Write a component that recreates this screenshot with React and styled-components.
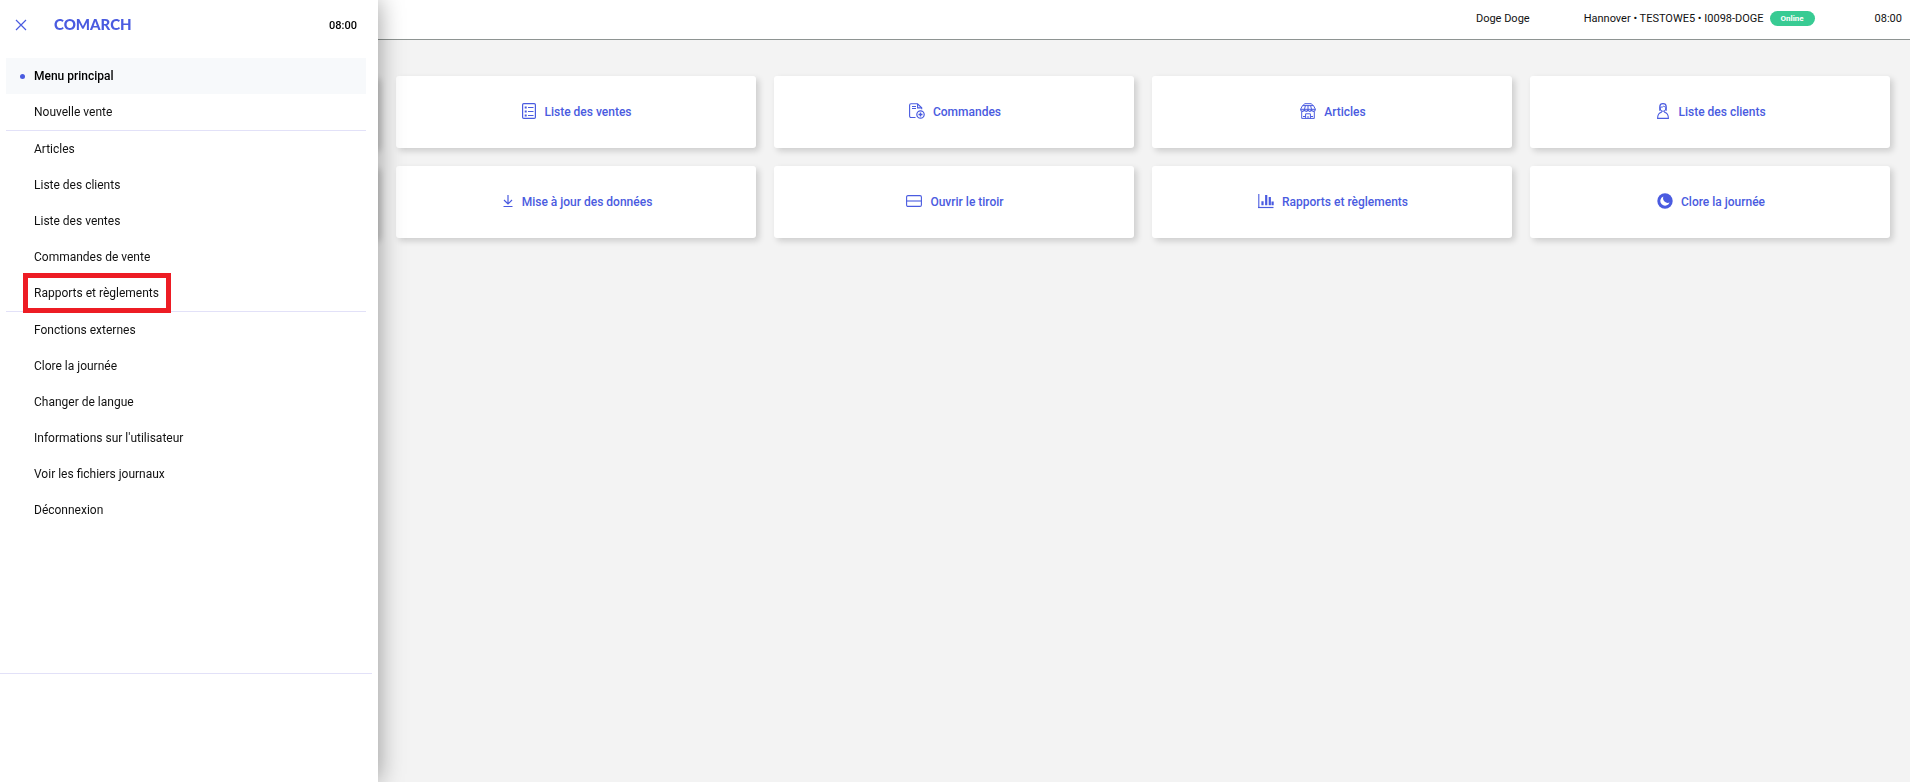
import styled, { createGlobalStyle } from "styled-components";
import { useState } from "react";

const GlobalStyle = createGlobalStyle`
    * {
        box-sizing: border-box;
    }
    body {
        margin: 0;
        background-color: #f3f3f3;
        color: #000;
        font-family: Roboto, "Liberation Sans", sans-serif;
        font-size: 12px;
    }
    button {
        font-family: inherit;
        font-size: inherit;
        border: 0;
        padding: 0;
        cursor: pointer;
    }
`;

const Page = styled.div`
    min-height: 100vh;
`;

const TopBar = styled.header`
    display: flex;
    justify-content: flex-end;
    align-items: center;
    height: 40px;
    padding: 0 8px 2px 0;
    background-color: #fff;
    border-bottom: 1px solid #8e9492;
    font-size: 11px;
    color: #111;
`;

const UserName = styled.span`
    margin-right: 54px;
`;

const Terminal = styled.div`
    display: flex;
    align-items: center;
    gap: 6px;
    margin-right: 60px;
`;

const Badge = styled.span`
    width: 45px;
    border-radius: 8px;
    background-color: #38cb93;
    color: #fff;
    font-size: 8px;
    font-weight: 700;
    line-height: 15px;
    text-align: center;
`;

const Tiles = styled.main`
    display: grid;
    grid-template-columns: repeat(5, 1fr);
    gap: 18px;
    padding: 36px 20px 36px 18px;
`;

const Tile = styled.button`
    display: flex;
    justify-content: center;
    align-items: center;
    gap: 8px;
    height: 72px;
    padding: 0 0 2px 2px;
    border-radius: 3px;
    background-color: #fff;
    color: #4a5be0;
    font-weight: 500;
    box-shadow: 3px 3px 6px rgba(0, 0, 0, 0.16);
`;

const TileLabel = styled.span`
    padding-top: 2px;
`;

const Drawer = styled.aside`
    position: fixed;
    top: 0;
    bottom: 0;
    left: 0;
    display: flex;
    flex-direction: column;
    width: 378px;
    background-color: #fff;
    box-shadow: 0 0 24px rgba(0, 0, 0, 0.4);
`;

const DrawerHeader = styled.div`
    display: flex;
    align-items: center;
    height: 58px;
    padding: 0 21px 8px 15px;
`;

const CloseButton = styled.button`
    display: flex;
    margin-right: 27px;
    background: none;
    color: #4a5be0;
`;

const Logo = styled.span`
    flex-grow: 1;
    padding-bottom: 2px;
    color: #4a5be0;
    font-family: Lato, sans-serif;
    font-size: 15px;
    font-weight: 900;
    line-height: 20px;
`;

const DrawerTime = styled.span`
    font-size: 11px;
    font-weight: 500;
`;

const Menu = styled.nav`
    flex-grow: 1;
    padding: 0 12px 0 6px;
`;

const MenuGroup = styled.ul`
    list-style: none;
    margin: 0;
    padding: 0;
    & + & {
        border-top: 1px solid #e2e1f8;
    }
`;

const MenuItem = styled.button`
    display: flex;
    align-items: center;
    width: 100%;
    height: 36px;
    padding-left: 12px;
    background-color: ${({$active}) => $active ? "#f7f9fb" : "transparent"};
    color: ${({$active}) => $active ? "#000" : "#111"};
    font-weight: ${({$active}) => $active ? 500 : 400};
    text-align: left;
`;

const Dot = styled.span`
    width: 5px;
    height: 5px;
    margin: 0 9px 0 2px;
    border-radius: 50%;
    background-color: ${({$active}) => $active ? "#4a5be0" : "transparent"};
`;

const Label = styled.span`
    position: relative;
    ${({$marked}) => $marked && `
        &::after {
            content: "";
            position: absolute;
            inset: -13px -12px -13px -11px;
            border: 5px solid #ed1c24;
        }
    `}
`;

const DrawerFooter = styled.div`
    height: 109px;
    margin-right: 6px;
    border-top: 1px solid #e2e1f8;
`;

const Svg = styled.svg`
    display: block;
    fill: none;
    stroke: currentColor;
`;

const CloseIcon = () => (
    <Svg width="12" height="12" viewBox="0 0 12 12">
        <path d="M1 1l10 10M11 1L1 11" strokeWidth="1.2" />
    </Svg>
);

const ListIcon = () => (
    <Svg width="14" height="16" viewBox="0 0 14 16">
        <rect x="0.6" y="0.6" width="12.8" height="14.8" rx="1.2" strokeWidth="1.2" />
        <path d="M6 4.5h5.5M6 8.5h5.5M6 12.5h5.5" strokeWidth="1.1" />
        <path d="M2.7 4.5h2M2.7 8.5h2M2.7 12.5h2" strokeWidth="2" />
    </Svg>
);

const OrderIcon = () => (
    <Svg width="16" height="16" viewBox="0 0 16 16">
        <path d="M6.5 14.5H2Q.6 14.5.6 13V2.2Q.6.8 2 .8h6.5l4.2 4v1.5" strokeWidth="1.1" />
        <path d="M8.6.9v4h4M3 3.5h4M3 5.5h4" strokeWidth="1.1" />
        <circle cx="11.5" cy="11.5" r="3.7" strokeWidth="1.2" />
        <path d="M11.5 9.5v4M9.5 11.5h4" strokeWidth="1.4" />
    </Svg>
);

const StoreIcon = () => (
    <Svg width="16" height="16" viewBox="0 0 16 16">
        <path d="M3 2.6L4.6.7h6.8L13 2.6M2.5 2.6h11l1.9 3.7H.6zM5.4 2.6L4.5 6.3M8 2.6v3.7M10.6 2.6l.9 3.7" />
        <path d="M.6 6.3Q.8 8.5 2.5 8.4 4.4 8.3 4.5 6.3 4.7 8.4 6.3 8.4 7.9 8.3 8 6.3 8.1 8.4 9.8 8.4 11.4 8.3 11.5 6.3 11.7 8.4 13.5 8.4 15.2 8.3 15.4 6.3" strokeWidth="1.2" />
        <path d="M1.7 8.5v6.9h12.6V8.5M5.6 15.4v-4.6h4.8v4.6M3 13.5h2.5M10.5 13.5H13M8 13v2.4" />
    </Svg>
);

const ClientIcon = () => (
    <Svg width="14" height="16" viewBox="-1 0 14 16">
        <path d="M2.8 7.8V3.5Q2.9.6 6 .6t3.2 2.9v4.3" strokeWidth="1.2" />
        <path d="M3 4.2Q6 4.4 6.8 3 7.5 4.2 9 4.2M3 4.5Q3.1 8.4 6 8.4T9 4.5" />
        <path d="M4.4 8.2v1Q.6 10.2.6 15.4h10.8q0-5.2-3.8-6.2v-1" strokeWidth="1.1" />
    </Svg>
);

const DownloadIcon = () => (
    <Svg width="12" height="14" viewBox="-1 0 12 14">
        <path d="M5 1v8.8M1 6l4 4 4-4M.5 12.5h9" strokeWidth="1.2" />
    </Svg>
);

const CashDrawerIcon = () => (
    <Svg width="16" height="12" viewBox="0 0 16 12">
        <rect x="0.6" y="0.6" width="14.8" height="10.8" rx="1.4" strokeWidth="1.1" />
        <path d="M.6 6h14.8" strokeWidth="1.1" />
    </Svg>
);

const ChartIcon = () => (
    <Svg width="16" height="16" viewBox="0 0 16 16">
        <path d="M.8 1v14" strokeWidth="1.1" />
        <path d="M0 14.5h15.5" strokeWidth="1.2" />
        <path d="M4.5 12.2V8.2M8.2 12.2V2M11.8 12.2V4M14.6 12.2V8.5" strokeWidth="2.2" />
    </Svg>
);

const MoonIcon = () => (
    <Svg width="16" height="16" viewBox="0 0 16 16">
        <circle cx="8" cy="8" r="7.7" fill="currentColor" stroke="none" />
        <path d="M6.4 3.4A4.8 4.8 0 1 0 12.6 9.6 4.8 4.8 0 0 1 6.4 3.4z" fill="#fff" stroke="none" />
    </Svg>
);

// the first tile of each row stays under the open drawer
const tileRows = [
    [
        null,
        {label: "Liste des ventes", Icon: ListIcon},
        {label: "Commandes", Icon: OrderIcon},
        {label: "Articles", Icon: StoreIcon},
        {label: "Liste des clients", Icon: ClientIcon},
    ],
    [
        null,
        {label: "Mise à jour des données", Icon: DownloadIcon},
        {label: "Ouvrir le tiroir", Icon: CashDrawerIcon},
        {label: "Rapports et règlements", Icon: ChartIcon},
        {label: "Clore la journée", Icon: MoonIcon},
    ],
];

const menuGroups = [
    ["Menu principal", "Nouvelle vente"],
    ["Articles", "Liste des clients", "Liste des ventes", "Commandes de vente", "Rapports et règlements"],
    [
        "Fonctions externes",
        "Clore la journée",
        "Changer de langue",
        "Informations sur l'utilisateur",
        "Voir les fichiers journaux",
        "Déconnexion",
    ],
];

const markedItem = "Rapports et règlements";

export default function App() {
    const [open, setOpen] = useState(true);
    const [active, setActive] = useState("Menu principal");

    return (
        <Page>
            <GlobalStyle />
            <TopBar>
                <UserName>Doge Doge</UserName>
                <Terminal>
                    <span>Hannover • TESTOWE5 • I0098-DOGE</span>
                    <Badge>Online</Badge>
                </Terminal>
                <time>08:00</time>
            </TopBar>
            <Tiles>
                {tileRows.flat().map((tile, i) => tile ? (
                    <Tile key={i}>
                        <tile.Icon />
                        <TileLabel>{tile.label}</TileLabel>
                    </Tile>
                ) : (
                    <Tile key={i} as="div" />
                ))}
            </Tiles>
            {open && (
                <Drawer>
                    <DrawerHeader>
                        <CloseButton onClick={() => setOpen(false)}>
                            <CloseIcon />
                        </CloseButton>
                        <Logo>COMARCH</Logo>
                        <DrawerTime as="time">08:00</DrawerTime>
                    </DrawerHeader>
                    <Menu>
                        {menuGroups.map((items, i) => (
                            <MenuGroup key={i}>
                                {items.map(item => (
                                    <li key={item}>
                                        <MenuItem
                                        $active={item === active}
                                        onClick={() => setActive(item)}>
                                            <Dot $active={item === active} />
                                            <Label $marked={item === markedItem}>{item}</Label>
                                        </MenuItem>
                                    </li>
                                ))}
                            </MenuGroup>
                        ))}
                    </Menu>
                    <DrawerFooter />
                </Drawer>
            )}
        </Page>
    )
}
